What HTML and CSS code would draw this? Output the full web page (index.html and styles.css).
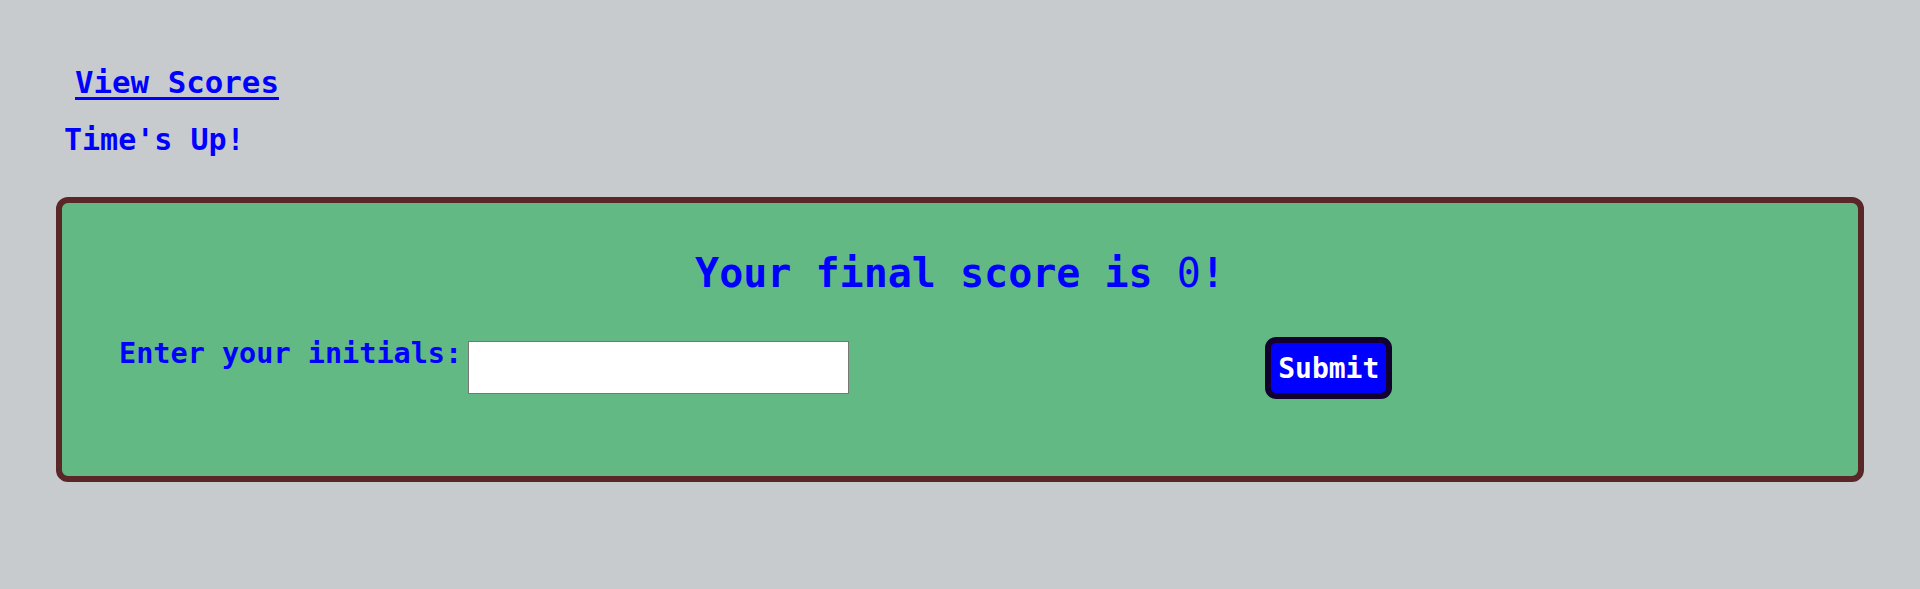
FILE: index.html
```html
<!DOCTYPE html>
<html lang="en">
<head>
<meta charset="utf-8">
<title>Quiz</title>
<link rel="stylesheet" href="styles.css">
</head>
<body>
<header class="header">
  <a class="scores-link" href="#">View Scores</a>
  <p class="timer">Time's Up!</p>
</header>
<main class="card">
  <h2 class="final">Your final score is <span class="score">0</span>!</h2>
  <form class="initials-row">
    <label class="initials-label" for="initials">Enter your initials:</label>
    <input class="initials-input" id="initials" type="text">
    <button class="submit-btn" type="button">Submit</button>
  </form>
</main>
</body>
</html>
```

FILE: styles.css
```css
html, body {
  margin: 0;
  padding: 0;
}

body {
  background: #c7cbce;
  font-family: "DejaVu Sans Mono", monospace;
  font-weight: bold;
  color: #0000ff;
  height: 589px;
  overflow: hidden;
}

.header {
  display: flex;
  flex-direction: column;
  align-items: flex-start;
  padding: 65px 0 0 64px;
}

.scores-link {
  color: #0000ff;
  font-size: 30.8px;
  line-height: 35px;
  margin-left: 11px;
  text-decoration: underline;
  text-underline-offset: 4px;
  text-decoration-thickness: 3px;
}

.timer {
  margin: 22px 0 0 0;
  font-size: 30px;
  line-height: 35px;
}

.card {
  margin: 40px 56px 0 56px;
  background: #63b983;
  border: 6px solid #5a2627;
  border-radius: 12px;
  padding: 47px 0 77px 0;
}

.final {
  margin: 0;
  text-align: center;
  font-size: 40px;
  line-height: 47px;
  font-weight: bold;
}

.score {
  font-weight: normal;
}

.initials-row {
  display: flex;
  align-items: flex-start;
  margin: 40px 0 0 57px;
}

.initials-label {
  font-size: 28.5px;
  line-height: 34px;
}

.initials-input {
  margin: 4px 0 0 6px;
  width: 381px;
  height: 53px;
  box-sizing: border-box;
  border: 1px solid #767676;
  background: #ffffff;
  padding: 0 4px;
  font-size: 16px;
}

.submit-btn {
  margin-left: 416px;
  background: #0000ff;
  color: #ffffff;
  border: 6px solid #12002e;
  border-radius: 11px;
  padding: 9px 7px 8px 7px;
  font-family: "DejaVu Sans Mono", monospace;
  font-weight: bold;
  font-size: 28px;
  line-height: 33px;
}
```
